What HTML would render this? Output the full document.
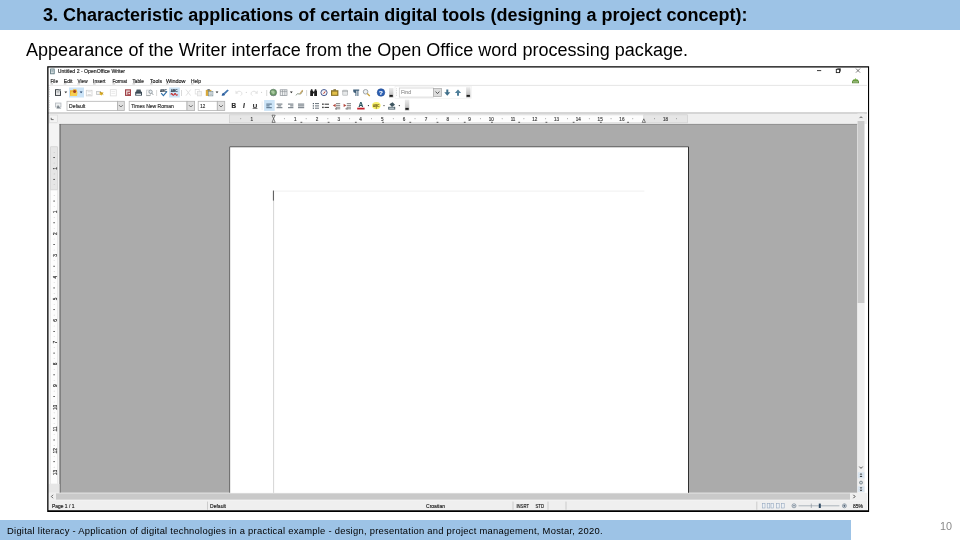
<!DOCTYPE html>
<html>
<head>
<meta charset="utf-8">
<title>Slide 10</title>
<style>
html,body{margin:0;padding:0;}
body{width:960px;height:540px;position:relative;overflow:hidden;background:#fff;font-family:"Liberation Sans",sans-serif;}
.a{position:absolute;}
#title,#sub,#ftxt,#pnum{will-change:transform;}
#hdr{left:0;top:0;width:960px;height:30px;background:#9dc3e6;}
#title{left:43px;top:5px;font-weight:bold;font-size:18px;line-height:20px;color:#000;white-space:nowrap;letter-spacing:0.005px;}
#sub{left:26px;top:40px;font-size:18px;line-height:20px;color:#000;white-space:nowrap;letter-spacing:0.03px;}
#ftr{left:0;top:520px;width:851px;height:20px;background:#9dc3e6;}
#ftxt{left:7.4px;top:524.5px;font-size:9.4px;line-height:12px;color:#000;white-space:nowrap;letter-spacing:0.266px;}
#pnum{left:940px;top:519.7px;font-size:10.8px;line-height:12px;color:#8a8a8a;white-space:nowrap;}
#win{left:47px;top:66px;width:822px;height:446px;background:#fff;}
#bsvg{left:44px;top:63px;width:830px;height:454px;}
#wsvg{left:47px;top:66px;width:822px;height:446px;background:#fff;overflow:hidden;font-family:"Liberation Sans",sans-serif;filter:blur(0.35px);}
</style>
</head>
<body>
<div id="hdr" class="a"></div>
<div id="title" class="a">3. Characteristic applications of certain digital tools (designing a project concept):</div>
<div id="sub" class="a">Appearance of the Writer interface from the Open Office word processing package.</div>
<div id="win" class="a"></div>
<svg id="wsvg" class="a" viewBox="47 66 822 446" preserveAspectRatio="none">
<defs><linearGradient id="hg" x1="0" y1="0" x2="0" y2="1"><stop offset="0" stop-color="#ececec"/><stop offset="1" stop-color="#b4b4b4"/></linearGradient></defs>
<rect x="50.20" y="68.60" width="4.40" height="5.60" fill="#4f6c74" />
<rect x="51.00" y="69.40" width="2.80" height="4.00" fill="#e8eef0" />
<line x1="51.30" y1="70.60" x2="53.50" y2="70.60" stroke="#4f6c74" stroke-width="0.5" />
<line x1="51.30" y1="71.80" x2="53.50" y2="71.80" stroke="#4f6c74" stroke-width="0.5" />
<text x="57.80" y="73.00" font-size="5.1" fill="#222222" stroke="#222222" stroke-width="0.16" text-anchor="start" textLength="67.20" lengthAdjust="spacingAndGlyphs" >Untitled 2 - OpenOffice Writer</text>
<line x1="817.00" y1="70.60" x2="821.20" y2="70.60" stroke="#222" stroke-width="0.9" />
<rect x="836.30" y="69.30" width="3.30" height="3.30" fill="none" stroke="#222" stroke-width="0.9"/>
<line x1="837.30" y1="68.70" x2="840.50" y2="68.70" stroke="#222" stroke-width="0.7" />
<line x1="840.50" y1="68.70" x2="840.50" y2="71.60" stroke="#222" stroke-width="0.7" />
<line x1="856.00" y1="68.60" x2="860.00" y2="72.60" stroke="#444" stroke-width="0.7" />
<line x1="860.00" y1="68.60" x2="856.00" y2="72.60" stroke="#444" stroke-width="0.7" />
<text x="50.50" y="83.00" font-size="5.1" fill="#222222" stroke="#222222" stroke-width="0.16" text-anchor="start" textLength="7.50" lengthAdjust="spacingAndGlyphs" >File</text>
<line x1="50.50" y1="83.90" x2="53.10" y2="83.90" stroke="#555" stroke-width="0.4" />
<text x="63.80" y="83.00" font-size="5.1" fill="#222222" stroke="#222222" stroke-width="0.16" text-anchor="start" textLength="8.70" lengthAdjust="spacingAndGlyphs" >Edit</text>
<line x1="63.80" y1="83.90" x2="66.40" y2="83.90" stroke="#555" stroke-width="0.4" />
<text x="77.50" y="83.00" font-size="5.1" fill="#222222" stroke="#222222" stroke-width="0.16" text-anchor="start" textLength="10.00" lengthAdjust="spacingAndGlyphs" >View</text>
<line x1="77.50" y1="83.90" x2="80.10" y2="83.90" stroke="#555" stroke-width="0.4" />
<text x="93.00" y="83.00" font-size="5.1" fill="#222222" stroke="#222222" stroke-width="0.16" text-anchor="start" textLength="12.50" lengthAdjust="spacingAndGlyphs" >Insert</text>
<line x1="93.00" y1="83.90" x2="95.60" y2="83.90" stroke="#555" stroke-width="0.4" />
<text x="112.50" y="83.00" font-size="5.1" fill="#222222" stroke="#222222" stroke-width="0.16" text-anchor="start" textLength="14.50" lengthAdjust="spacingAndGlyphs" >Format</text>
<line x1="112.50" y1="83.90" x2="115.10" y2="83.90" stroke="#555" stroke-width="0.4" />
<text x="132.50" y="83.00" font-size="5.1" fill="#222222" stroke="#222222" stroke-width="0.16" text-anchor="start" textLength="11.30" lengthAdjust="spacingAndGlyphs" >Table</text>
<line x1="132.50" y1="83.90" x2="135.10" y2="83.90" stroke="#555" stroke-width="0.4" />
<text x="150.00" y="83.00" font-size="5.1" fill="#222222" stroke="#222222" stroke-width="0.16" text-anchor="start" textLength="12.00" lengthAdjust="spacingAndGlyphs" >Tools</text>
<line x1="150.00" y1="83.90" x2="152.60" y2="83.90" stroke="#555" stroke-width="0.4" />
<text x="166.00" y="83.00" font-size="5.1" fill="#222222" stroke="#222222" stroke-width="0.16" text-anchor="start" textLength="19.50" lengthAdjust="spacingAndGlyphs" >Window</text>
<line x1="166.00" y1="83.90" x2="168.60" y2="83.90" stroke="#555" stroke-width="0.4" />
<text x="191.00" y="83.00" font-size="5.1" fill="#222222" stroke="#222222" stroke-width="0.16" text-anchor="start" textLength="10.00" lengthAdjust="spacingAndGlyphs" >Help</text>
<line x1="191.00" y1="83.90" x2="193.60" y2="83.90" stroke="#555" stroke-width="0.4" />
<path d="M852 83.3 L859 83.3 L859 81.3 L857.6 79.6 L853.4 79.6 L852 81.3 Z" fill="#5f8f3a" stroke="none" stroke-width="1" />
<path d="M854 80.6 L855.5 78 L857 80.6 Z" fill="#7ab648" stroke="none" stroke-width="1" />
<rect x="853.00" y="81.60" width="5.00" height="0.70" fill="#dfe8d0" />
<line x1="48.00" y1="85.40" x2="867.00" y2="85.40" stroke="#e2e2e2" stroke-width="0.9" />
<rect x="49.20" y="87.50" width="0.80" height="0.70" fill="#c4c4c4" />
<rect x="49.20" y="89.20" width="0.80" height="0.70" fill="#c4c4c4" />
<rect x="49.20" y="90.90" width="0.80" height="0.70" fill="#c4c4c4" />
<rect x="49.20" y="92.60" width="0.80" height="0.70" fill="#c4c4c4" />
<rect x="49.20" y="94.30" width="0.80" height="0.70" fill="#c4c4c4" />
<rect x="49.20" y="96.00" width="0.80" height="0.70" fill="#c4c4c4" />
<rect x="49.20" y="100.50" width="0.80" height="0.70" fill="#c4c4c4" />
<rect x="49.20" y="102.20" width="0.80" height="0.70" fill="#c4c4c4" />
<rect x="49.20" y="103.90" width="0.80" height="0.70" fill="#c4c4c4" />
<rect x="49.20" y="105.60" width="0.80" height="0.70" fill="#c4c4c4" />
<rect x="49.20" y="107.30" width="0.80" height="0.70" fill="#c4c4c4" />
<rect x="49.20" y="109.00" width="0.80" height="0.70" fill="#c4c4c4" />
<rect x="49.20" y="110.70" width="0.80" height="0.70" fill="#c4c4c4" />
<rect x="55.00" y="89.20" width="6.00" height="6.70" fill="#3c4246" />
<rect x="56.00" y="90.20" width="4.00" height="4.70" fill="#f4f4f4" />
<line x1="56.50" y1="91.40" x2="59.50" y2="91.40" stroke="#8a8f92" stroke-width="0.6" />
<line x1="56.50" y1="92.80" x2="59.50" y2="92.80" stroke="#8a8f92" stroke-width="0.6" />
<rect x="58.60" y="89.20" width="2.40" height="2.00" fill="#9aa3a8" />
<path d="M64.40 91.46 L67.20 91.46 L65.80 93.28 Z" fill="#333" stroke="none" stroke-width="1" />
<rect x="69.00" y="87.50" width="15.00" height="10.00" fill="#cce4f7" />
<path d="M70 90.2 L72.6 90.2 L73.4 89.3 L76.4 89.3 L76.4 90.2 L77 90.2 L77 95.9 L70 95.9 Z" fill="#eeb02c" stroke="none" stroke-width="1" />
<path d="M70 95.9 L71.3 91.8 L77.6 91.8 L77 95.9 Z" fill="#f7cf52" stroke="none" stroke-width="1" />
<circle cx="74.60" cy="91.60" r="1.50" fill="#a6401f" stroke="none" stroke-width="1"/>
<path d="M79.70 91.46 L82.50 91.46 L81.10 93.28 Z" fill="#1d3d66" stroke="none" stroke-width="1" />
<rect x="86.30" y="90.30" width="5.70" height="5.60" fill="none" stroke="#cfcfcf" stroke-width="0.8"/>
<rect x="87.60" y="90.30" width="3.20" height="2.10" fill="#e6e6e6" />
<rect x="87.60" y="94.00" width="3.20" height="1.90" fill="#dcdcdc" />
<rect x="96.20" y="91.00" width="4.80" height="3.80" fill="#b9bcbe" />
<rect x="96.90" y="91.70" width="3.40" height="2.40" fill="#f2f2f2" />
<path d="M99.6 92 L103.6 92.6 L101.8 95.4 L99.8 94.6 Z" fill="#e3b52d" stroke="none" stroke-width="1" />
<line x1="100.00" y1="92.00" x2="103.40" y2="94.60" stroke="#8a6a14" stroke-width="0.5" />
<rect x="110.30" y="89.70" width="6.00" height="6.20" fill="none" stroke="#dcdcdc" stroke-width="0.8"/>
<line x1="111.40" y1="91.60" x2="115.20" y2="91.60" stroke="#e2e2e2" stroke-width="0.7" />
<line x1="111.40" y1="93.40" x2="115.20" y2="93.40" stroke="#e2e2e2" stroke-width="0.7" />
<rect x="125.00" y="89.30" width="6.00" height="6.60" fill="#9c4046" />
<rect x="126.10" y="90.40" width="3.80" height="4.40" fill="#ecd6d6" />
<rect x="127.40" y="91.80" width="3.60" height="4.10" fill="#a8484c" />
<rect x="128.40" y="92.90" width="1.60" height="1.30" fill="#f4e4e4" />
<path d="M136.6 89.4 L140.6 89.4 L141.2 92 L136 92 Z" fill="#4c5a63" stroke="none" stroke-width="1" />
<rect x="135.20" y="91.80" width="6.80" height="3.40" fill="#3b4a55" />
<rect x="136.20" y="93.60" width="4.80" height="2.30" fill="#dfe4e7" />
<rect x="135.20" y="95.30" width="6.80" height="0.60" fill="#4c5a63" />
<rect x="146.20" y="89.70" width="4.80" height="6.20" fill="#c9cccf" />
<rect x="147.00" y="90.50" width="3.20" height="4.60" fill="#f5f5f5" />
<circle cx="150.60" cy="91.80" r="1.70" fill="#e9eef2" stroke="#7d868c" stroke-width="0.7"/>
<line x1="151.80" y1="93.10" x2="153.20" y2="94.80" stroke="#7d868c" stroke-width="0.9" />
<line x1="146.20" y1="95.60" x2="150.00" y2="95.60" stroke="#8a8f92" stroke-width="0.6" />
<line x1="156.60" y1="90.00" x2="156.60" y2="96.00" stroke="#c8c8c8" stroke-width="0.7" />
<text x="159.90" y="92.00" font-size="3.4" fill="#2a3a48" stroke="#2a3a48" stroke-width="0.16" text-anchor="start" textLength="7.00" lengthAdjust="spacingAndGlyphs" font-weight="bold">ABC</text>
<path d="M161.2 93.2 L163.4 95.6 L167 91.4" fill="none" stroke="#2f6fa8" stroke-width="1.2" />
<rect x="169.10" y="87.50" width="10.70" height="10.00" fill="#cce4f7" />
<text x="170.80" y="92.00" font-size="3.4" fill="#2a3a48" stroke="#2a3a48" stroke-width="0.16" text-anchor="start" textLength="6.80" lengthAdjust="spacingAndGlyphs" font-weight="bold">ABC</text>
<path d="M170.8 94.4 Q171.7 92.8 172.5 94.4 T174.2 94.4 T175.9 94.4 T177.6 94.4" fill="none" stroke="#c62a2a" stroke-width="1.1" />
<line x1="181.50" y1="90.00" x2="181.50" y2="96.00" stroke="#c8c8c8" stroke-width="0.7" />
<line x1="186.00" y1="89.60" x2="190.60" y2="95.60" stroke="#dedede" stroke-width="0.9" />
<line x1="190.60" y1="89.60" x2="186.00" y2="95.60" stroke="#dedede" stroke-width="0.9" />
<rect x="195.20" y="89.60" width="4.00" height="4.40" fill="none" stroke="#dadada" stroke-width="0.7"/>
<rect x="197.40" y="91.60" width="4.00" height="4.30" fill="#f3f3f3" stroke="#dadada" stroke-width="0.7"/>
<rect x="205.80" y="89.90" width="5.60" height="6.00" fill="#d9a93a" />
<rect x="207.40" y="89.10" width="2.40" height="1.50" fill="#6b7479" />
<rect x="208.40" y="91.40" width="4.50" height="4.50" fill="#eef1f2" stroke="#6e8790" stroke-width="0.6"/>
<line x1="209.30" y1="92.90" x2="212.00" y2="92.90" stroke="#6e8790" stroke-width="0.5" />
<line x1="209.30" y1="94.30" x2="212.00" y2="94.30" stroke="#6e8790" stroke-width="0.5" />
<path d="M215.60 91.46 L218.40 91.46 L217.00 93.28 Z" fill="#222" stroke="none" stroke-width="1" />
<path d="M227.4 89.4 L228.8 90.6 L225.2 94 L223.9 92.8 Z" fill="#3f74b0" stroke="none" stroke-width="1" />
<path d="M221.6 95.8 Q221.8 93 223.9 92.8 L225.2 94 Q225 96.2 221.6 95.8 Z" fill="#2d5f9e" stroke="none" stroke-width="1" />
<path d="M236 93 Q239 89.6 241.8 92.6 Q242.6 94.4 240.6 95.6" fill="none" stroke="#e2e2e2" stroke-width="1.0" />
<path d="M235.4 90.6 L235.6 94 L238.6 93.2 Z" fill="#e2e2e2" stroke="none" stroke-width="1" />
<circle cx="246.30" cy="92.40" r="0.55" fill="#cfcfcf" stroke="none" stroke-width="1"/>
<path d="M257 93 Q254 89.6 251.2 92.6 Q250.4 94.4 252.4 95.6" fill="none" stroke="#e2e2e2" stroke-width="1.0" />
<path d="M257.8 90.6 L257.6 94 L254.6 93.2 Z" fill="#e2e2e2" stroke="none" stroke-width="1" />
<circle cx="261.60" cy="92.40" r="0.55" fill="#cfcfcf" stroke="none" stroke-width="1"/>
<line x1="266.70" y1="90.00" x2="266.70" y2="96.00" stroke="#c8c8c8" stroke-width="0.7" />
<circle cx="273.30" cy="92.50" r="3.30" fill="#6f9c6a" stroke="#4e6e55" stroke-width="0.6"/>
<path d="M271 91 Q273 89.8 274.6 91.4 Q275.4 93.4 273.4 94.2 Q271.4 94 271 91 Z" fill="#a8c8a0" stroke="none" stroke-width="1" />
<rect x="271.20" y="95.20" width="4.40" height="0.70" fill="#7d8a8f" />
<rect x="280.20" y="89.80" width="6.80" height="5.80" fill="#f0f2f3" stroke="#8a9096" stroke-width="0.7"/>
<line x1="282.50" y1="89.80" x2="282.50" y2="95.60" stroke="#8a9096" stroke-width="0.6" />
<line x1="284.80" y1="89.80" x2="284.80" y2="95.60" stroke="#8a9096" stroke-width="0.6" />
<line x1="280.20" y1="91.60" x2="287.00" y2="91.60" stroke="#8a9096" stroke-width="0.6" />
<path d="M289.90 91.46 L292.70 91.46 L291.30 93.28 Z" fill="#222" stroke="none" stroke-width="1" />
<path d="M296 95.4 Q297.4 92.6 299 94 T302.8 91" fill="none" stroke="#8c9a8c" stroke-width="1.0" />
<path d="M299.4 93.4 L302.2 89.8 L303.2 90.6 L300.4 94.2 Z" fill="#c9a866" stroke="none" stroke-width="1" />
<line x1="306.60" y1="90.00" x2="306.60" y2="96.00" stroke="#c8c8c8" stroke-width="0.7" />
<rect x="310.20" y="90.60" width="2.80" height="5.40" fill="#1e1e1e" />
<rect x="314.20" y="90.60" width="2.80" height="5.40" fill="#1e1e1e" />
<rect x="310.90" y="89.20" width="1.50" height="1.80" fill="#2a2a2a" />
<rect x="314.80" y="89.20" width="1.50" height="1.80" fill="#2a2a2a" />
<rect x="312.60" y="91.60" width="2.00" height="1.80" fill="#222222" />
<circle cx="324.00" cy="92.60" r="3.10" fill="#f3f5f8" stroke="#3a4f8a" stroke-width="0.9"/>
<path d="M322.4 94.4 L324.4 92 L325.8 90.6 L324.8 93 Z" fill="#c0392b" stroke="none" stroke-width="1" />
<rect x="331.00" y="90.20" width="7.40" height="5.70" fill="#8a7428" />
<rect x="332.20" y="91.60" width="5.00" height="3.20" fill="#e3c04a" />
<rect x="333.40" y="89.30" width="2.60" height="1.10" fill="#6e5c1e" />
<rect x="342.20" y="89.80" width="5.80" height="6.00" fill="#c3c6c8" rx="1.2"/>
<rect x="343.20" y="90.80" width="3.80" height="4.00" fill="#e7e9ea" />
<line x1="342.20" y1="91.20" x2="348.00" y2="91.20" stroke="#8d9295" stroke-width="0.6" />
<path d="M353.2 89.6 L359.2 89.6 L359.2 90.8 L358.4 90.8 L358.4 95.9 L357.4 95.9 L357.4 90.8 L356.4 90.8 L356.4 95.9 L355.4 95.9 L355.4 93 Q353.2 92.8 353.2 91.2 Z" fill="#41607a" stroke="none" stroke-width="1" />
<circle cx="365.60" cy="91.80" r="2.30" fill="#eef1f3" stroke="#8a9196" stroke-width="0.8"/>
<line x1="367.20" y1="93.60" x2="369.80" y2="96.00" stroke="#c9a23a" stroke-width="1.3" />
<circle cx="381.00" cy="92.50" r="3.80" fill="#2c5fb3" stroke="#1d4488" stroke-width="0.5"/>
<text x="381.00" y="94.80" font-size="6.2" fill="#ffffff" stroke="#ffffff" stroke-width="0.16" text-anchor="middle" font-weight="bold">?</text>
<rect x="389.00" y="88.00" width="4.40" height="9.50" fill="url(#hg)"/>
<rect x="389.50" y="94.90" width="3.30" height="1.90" fill="#1a1a1a" />
<rect x="395.00" y="86.60" width="76.40" height="12.00" fill="#ffffff" stroke="#eeeeee" stroke-width="0.6"/>
<rect x="396.20" y="88.50" width="0.80" height="0.70" fill="#c4c4c4" />
<rect x="396.20" y="90.20" width="0.80" height="0.70" fill="#c4c4c4" />
<rect x="396.20" y="91.90" width="0.80" height="0.70" fill="#c4c4c4" />
<rect x="396.20" y="93.60" width="0.80" height="0.70" fill="#c4c4c4" />
<rect x="396.20" y="95.30" width="0.80" height="0.70" fill="#c4c4c4" />
<rect x="399.30" y="88.00" width="34.30" height="9.10" fill="#ffffff" stroke="#c9c9c9" stroke-width="0.7"/>
<text x="401.00" y="94.40" font-size="5.0" fill="#9a9a9a" stroke="#9a9a9a" stroke-width="0.16" text-anchor="start" textLength="10.00" lengthAdjust="spacingAndGlyphs" >Find</text>
<rect x="433.60" y="88.40" width="7.90" height="8.20" fill="#dddddd" stroke="#a8a8a8" stroke-width="0.7"/>
<path d="M435.6 91.6 L437.5 93.6 L439.4 91.6" fill="none" stroke="#333" stroke-width="0.8" />
<path d="M446.3 89.4 L448.3 89.4 L448.3 92.2 L450.3 92.2 L447.3 95.8 L444.3 92.2 L446.3 92.2 Z" fill="#3f6f8a" stroke="none" stroke-width="1" />
<path d="M457 95.8 L459 95.8 L459 93 L461.1 93 L458 89.4 L454.9 93 L457 93 Z" fill="#4f7f9a" stroke="none" stroke-width="1" />
<rect x="466.10" y="87.20" width="4.40" height="10.30" fill="url(#hg)"/>
<rect x="466.60" y="94.90" width="3.30" height="1.90" fill="#1a1a1a" />
<rect x="55.00" y="102.60" width="6.40" height="4.80" fill="#b9bec2" />
<rect x="55.90" y="103.50" width="4.60" height="3.00" fill="#eef0f1" />
<path d="M56.4 108.4 L58 104.8 L59.2 107 L61.4 108.4 Z" fill="#7d868c" stroke="none" stroke-width="1" />
<rect x="67.00" y="101.30" width="50.40" height="9.20" fill="#ffffff" stroke="#b4b4b4" stroke-width="0.8"/>
<rect x="117.40" y="101.30" width="6.90" height="9.20" fill="#e0e0e0" stroke="#b0b0b0" stroke-width="0.8"/>
<path d="M118.95 105.1 L120.85 107 L122.75 105.1" fill="none" stroke="#555" stroke-width="0.8" />
<text x="69.10" y="107.90" font-size="5.1" fill="#2e2e2e" stroke="#2e2e2e" stroke-width="0.16" text-anchor="start" textLength="16.20" lengthAdjust="spacingAndGlyphs" >Default</text>
<rect x="129.20" y="101.30" width="57.80" height="9.20" fill="#ffffff" stroke="#b4b4b4" stroke-width="0.8"/>
<rect x="187.00" y="101.30" width="7.60" height="9.20" fill="#e0e0e0" stroke="#b0b0b0" stroke-width="0.8"/>
<path d="M188.90 105.1 L190.80 107 L192.70 105.1" fill="none" stroke="#555" stroke-width="0.8" />
<text x="131.30" y="107.90" font-size="5.1" fill="#2e2e2e" stroke="#2e2e2e" stroke-width="0.16" text-anchor="start" textLength="42.50" lengthAdjust="spacingAndGlyphs" >Times New Roman</text>
<rect x="198.20" y="101.30" width="19.10" height="9.20" fill="#ffffff" stroke="#b4b4b4" stroke-width="0.8"/>
<rect x="217.30" y="101.30" width="7.40" height="9.20" fill="#e0e0e0" stroke="#b0b0b0" stroke-width="0.8"/>
<path d="M219.10 105.1 L221.00 107 L222.90 105.1" fill="none" stroke="#555" stroke-width="0.8" />
<text x="200.30" y="107.90" font-size="5.1" fill="#2e2e2e" stroke="#2e2e2e" stroke-width="0.16" text-anchor="start" textLength="5.00" lengthAdjust="spacingAndGlyphs" >12</text>
<text x="231.60" y="107.90" font-size="6.4" fill="#2a2a2a" stroke="#2a2a2a" stroke-width="0.16" text-anchor="start" font-weight="bold">B</text>
<text x="243.00" y="107.90" font-size="6.4" fill="#2a2a2a" stroke="#2a2a2a" stroke-width="0.16" text-anchor="start" font-weight="bold" font-style="italic">I</text>
<text x="252.80" y="107.60" font-size="6.2" fill="#2a2a2a" stroke="#2a2a2a" stroke-width="0.16" text-anchor="start" font-weight="bold">U</text>
<line x1="252.70" y1="108.50" x2="257.40" y2="108.50" stroke="#2a2a2a" stroke-width="0.6" />
<line x1="262.10" y1="101.50" x2="262.10" y2="110.00" stroke="#e4e4e4" stroke-width="0.6" />
<rect x="264.10" y="100.00" width="10.60" height="10.90" fill="#cce4f7" />
<line x1="266.30" y1="104.10" x2="271.80" y2="104.10" stroke="#2f4a63" stroke-width="0.8" />
<line x1="266.30" y1="105.90" x2="269.60" y2="105.90" stroke="#2f4a63" stroke-width="0.8" />
<line x1="266.30" y1="107.70" x2="271.80" y2="107.70" stroke="#2f4a63" stroke-width="0.8" />
<line x1="276.60" y1="104.10" x2="282.40" y2="104.10" stroke="#3c4a55" stroke-width="0.8" />
<line x1="277.76" y1="105.90" x2="281.24" y2="105.90" stroke="#3c4a55" stroke-width="0.8" />
<line x1="276.60" y1="107.70" x2="282.40" y2="107.70" stroke="#3c4a55" stroke-width="0.8" />
<line x1="288.00" y1="104.10" x2="293.40" y2="104.10" stroke="#3c4a55" stroke-width="0.8" />
<line x1="290.16" y1="105.90" x2="293.40" y2="105.90" stroke="#3c4a55" stroke-width="0.8" />
<line x1="288.00" y1="107.70" x2="293.40" y2="107.70" stroke="#3c4a55" stroke-width="0.8" />
<line x1="298.00" y1="104.10" x2="304.20" y2="104.10" stroke="#3c4a55" stroke-width="0.8" />
<line x1="298.00" y1="105.90" x2="304.20" y2="105.90" stroke="#3c4a55" stroke-width="0.8" />
<line x1="298.00" y1="107.70" x2="304.20" y2="107.70" stroke="#3c4a55" stroke-width="0.8" />
<rect x="312.80" y="103.00" width="1.10" height="1.20" fill="#3c4a55" />
<line x1="315.00" y1="103.60" x2="319.00" y2="103.60" stroke="#3c4a55" stroke-width="0.8" />
<rect x="312.80" y="105.30" width="1.10" height="1.20" fill="#3c4a55" />
<line x1="315.00" y1="105.90" x2="319.00" y2="105.90" stroke="#3c4a55" stroke-width="0.8" />
<rect x="312.80" y="107.60" width="1.10" height="1.20" fill="#3c4a55" />
<line x1="315.00" y1="108.20" x2="319.00" y2="108.20" stroke="#3c4a55" stroke-width="0.8" />
<rect x="322.20" y="103.50" width="1.40" height="1.40" fill="#222" />
<line x1="324.60" y1="104.20" x2="329.00" y2="104.20" stroke="#333" stroke-width="1.0" />
<rect x="322.20" y="106.70" width="1.40" height="1.40" fill="#222" />
<line x1="324.60" y1="107.40" x2="329.00" y2="107.40" stroke="#333" stroke-width="1.0" />
<line x1="336.00" y1="103.60" x2="340.20" y2="103.60" stroke="#555" stroke-width="0.7" />
<line x1="336.00" y1="105.40" x2="340.20" y2="105.40" stroke="#555" stroke-width="0.7" />
<line x1="336.00" y1="107.20" x2="340.20" y2="107.20" stroke="#555" stroke-width="0.7" />
<path d="M332.8 105.4 L335.6 103.8 L335.6 107 Z" fill="#b5473c" stroke="none" stroke-width="1" />
<line x1="335.00" y1="108.80" x2="340.20" y2="108.80" stroke="#555" stroke-width="0.7" />
<line x1="336.20" y1="107.40" x2="336.20" y2="110.00" stroke="#555" stroke-width="0.5" />
<line x1="346.80" y1="103.60" x2="351.00" y2="103.60" stroke="#555" stroke-width="0.7" />
<line x1="346.80" y1="105.40" x2="351.00" y2="105.40" stroke="#555" stroke-width="0.7" />
<line x1="346.80" y1="107.20" x2="351.00" y2="107.20" stroke="#555" stroke-width="0.7" />
<path d="M346.4 105.4 L343.6 103.8 L343.6 107 Z" fill="#b5473c" stroke="none" stroke-width="1" />
<line x1="345.40" y1="108.80" x2="351.00" y2="108.80" stroke="#555" stroke-width="0.7" />
<line x1="347.00" y1="107.40" x2="347.00" y2="110.00" stroke="#555" stroke-width="0.5" />
<text x="360.90" y="107.30" font-size="6.6" fill="#24505a" stroke="#24505a" stroke-width="0.16" text-anchor="middle" font-weight="bold">A</text>
<rect x="357.20" y="107.70" width="7.40" height="1.80" fill="#c4202a" />
<circle cx="368.40" cy="105.60" r="0.60" fill="#222" stroke="none" stroke-width="1"/>
<ellipse cx="376.3" cy="105.6" rx="4.3" ry="3.6" fill="#f7f06a"/>
<text x="376.30" y="106.80" font-size="3.2" fill="#7a6a1e" stroke="#7a6a1e" stroke-width="0.16" text-anchor="middle" textLength="6.40" lengthAdjust="spacingAndGlyphs" font-weight="bold">ABC</text>
<line x1="376.30" y1="106.80" x2="376.30" y2="108.80" stroke="#7a6a1e" stroke-width="0.8" />
<circle cx="384.00" cy="105.60" r="0.60" fill="#222" stroke="none" stroke-width="1"/>
<path d="M389.4 104.2 L392.6 102.2 L395 104.8 L392 107 Z" fill="#3e5560" stroke="none" stroke-width="1" />
<rect x="388.20" y="106.80" width="7.00" height="2.80" fill="#50646e" />
<rect x="389.20" y="107.60" width="5.00" height="1.20" fill="#c9d2d6" />
<circle cx="399.30" cy="105.60" r="0.60" fill="#222" stroke="none" stroke-width="1"/>
<rect x="404.90" y="99.70" width="4.40" height="10.80" fill="url(#hg)"/>
<rect x="405.40" y="107.90" width="3.30" height="1.90" fill="#1a1a1a" />
<line x1="48.00" y1="113.10" x2="867.00" y2="113.10" stroke="#9a9a9a" stroke-width="1.0" />
<rect x="48.00" y="113.60" width="819.00" height="10.40" fill="#efefef" />
<rect x="48.00" y="124.00" width="12.00" height="369.00" fill="#f4f4f4" />
<rect x="49.60" y="115.00" width="7.90" height="7.60" fill="#f3f3f3" stroke="#d8d8d8" stroke-width="0.6"/>
<path d="M51.2 117.8 L51.2 119.6 L53.6 119.6" fill="none" stroke="#333" stroke-width="0.7" />
<rect x="229.60" y="114.90" width="458.00" height="7.90" fill="#fdfdfd" stroke="#cfcfcf" stroke-width="0.6"/>
<rect x="229.60" y="114.90" width="43.70" height="7.90" fill="#e6e6e6" stroke="#cfcfcf" stroke-width="0.6"/>
<rect x="643.80" y="114.90" width="43.80" height="7.90" fill="#e6e6e6" stroke="#cfcfcf" stroke-width="0.6"/>
<text x="251.67" y="120.90" font-size="4.6" fill="#444" stroke="#444" stroke-width="0.16" text-anchor="middle" >1</text>
<circle cx="240.78" cy="118.80" r="0.45" fill="#555" stroke="none" stroke-width="1"/>
<text x="295.23" y="120.90" font-size="4.6" fill="#444" stroke="#444" stroke-width="0.16" text-anchor="middle" >1</text>
<circle cx="284.34" cy="118.80" r="0.45" fill="#555" stroke="none" stroke-width="1"/>
<text x="317.01" y="120.90" font-size="4.6" fill="#444" stroke="#444" stroke-width="0.16" text-anchor="middle" >2</text>
<circle cx="306.12" cy="118.80" r="0.45" fill="#555" stroke="none" stroke-width="1"/>
<text x="338.79" y="120.90" font-size="4.6" fill="#444" stroke="#444" stroke-width="0.16" text-anchor="middle" >3</text>
<circle cx="327.90" cy="118.80" r="0.45" fill="#555" stroke="none" stroke-width="1"/>
<text x="360.57" y="120.90" font-size="4.6" fill="#444" stroke="#444" stroke-width="0.16" text-anchor="middle" >4</text>
<circle cx="349.68" cy="118.80" r="0.45" fill="#555" stroke="none" stroke-width="1"/>
<text x="382.35" y="120.90" font-size="4.6" fill="#444" stroke="#444" stroke-width="0.16" text-anchor="middle" >5</text>
<circle cx="371.46" cy="118.80" r="0.45" fill="#555" stroke="none" stroke-width="1"/>
<text x="404.13" y="120.90" font-size="4.6" fill="#444" stroke="#444" stroke-width="0.16" text-anchor="middle" >6</text>
<circle cx="393.24" cy="118.80" r="0.45" fill="#555" stroke="none" stroke-width="1"/>
<text x="425.91" y="120.90" font-size="4.6" fill="#444" stroke="#444" stroke-width="0.16" text-anchor="middle" >7</text>
<circle cx="415.02" cy="118.80" r="0.45" fill="#555" stroke="none" stroke-width="1"/>
<text x="447.69" y="120.90" font-size="4.6" fill="#444" stroke="#444" stroke-width="0.16" text-anchor="middle" >8</text>
<circle cx="436.80" cy="118.80" r="0.45" fill="#555" stroke="none" stroke-width="1"/>
<text x="469.47" y="120.90" font-size="4.6" fill="#444" stroke="#444" stroke-width="0.16" text-anchor="middle" >9</text>
<circle cx="458.58" cy="118.80" r="0.45" fill="#555" stroke="none" stroke-width="1"/>
<text x="491.25" y="120.90" font-size="4.6" fill="#444" stroke="#444" stroke-width="0.16" text-anchor="middle" >10</text>
<circle cx="480.36" cy="118.80" r="0.45" fill="#555" stroke="none" stroke-width="1"/>
<text x="513.03" y="120.90" font-size="4.6" fill="#444" stroke="#444" stroke-width="0.16" text-anchor="middle" >11</text>
<circle cx="502.14" cy="118.80" r="0.45" fill="#555" stroke="none" stroke-width="1"/>
<text x="534.81" y="120.90" font-size="4.6" fill="#444" stroke="#444" stroke-width="0.16" text-anchor="middle" >12</text>
<circle cx="523.92" cy="118.80" r="0.45" fill="#555" stroke="none" stroke-width="1"/>
<text x="556.59" y="120.90" font-size="4.6" fill="#444" stroke="#444" stroke-width="0.16" text-anchor="middle" >13</text>
<circle cx="545.70" cy="118.80" r="0.45" fill="#555" stroke="none" stroke-width="1"/>
<text x="578.37" y="120.90" font-size="4.6" fill="#444" stroke="#444" stroke-width="0.16" text-anchor="middle" >14</text>
<circle cx="567.48" cy="118.80" r="0.45" fill="#555" stroke="none" stroke-width="1"/>
<text x="600.15" y="120.90" font-size="4.6" fill="#444" stroke="#444" stroke-width="0.16" text-anchor="middle" >15</text>
<circle cx="589.26" cy="118.80" r="0.45" fill="#555" stroke="none" stroke-width="1"/>
<text x="621.93" y="120.90" font-size="4.6" fill="#444" stroke="#444" stroke-width="0.16" text-anchor="middle" >16</text>
<circle cx="611.04" cy="118.80" r="0.45" fill="#555" stroke="none" stroke-width="1"/>
<circle cx="632.82" cy="118.80" r="0.45" fill="#555" stroke="none" stroke-width="1"/>
<text x="665.49" y="120.90" font-size="4.6" fill="#444" stroke="#444" stroke-width="0.16" text-anchor="middle" >18</text>
<circle cx="654.60" cy="118.80" r="0.45" fill="#555" stroke="none" stroke-width="1"/>
<circle cx="676.38" cy="118.80" r="0.45" fill="#555" stroke="none" stroke-width="1"/>
<line x1="300.48" y1="122.30" x2="302.28" y2="122.30" stroke="#333" stroke-width="0.8" />
<line x1="327.70" y1="122.30" x2="329.50" y2="122.30" stroke="#333" stroke-width="0.8" />
<line x1="354.93" y1="122.30" x2="356.73" y2="122.30" stroke="#333" stroke-width="0.8" />
<line x1="382.15" y1="122.30" x2="383.95" y2="122.30" stroke="#333" stroke-width="0.8" />
<line x1="409.38" y1="122.30" x2="411.18" y2="122.30" stroke="#333" stroke-width="0.8" />
<line x1="436.60" y1="122.30" x2="438.40" y2="122.30" stroke="#333" stroke-width="0.8" />
<line x1="463.82" y1="122.30" x2="465.62" y2="122.30" stroke="#333" stroke-width="0.8" />
<line x1="491.05" y1="122.30" x2="492.85" y2="122.30" stroke="#333" stroke-width="0.8" />
<line x1="518.27" y1="122.30" x2="520.08" y2="122.30" stroke="#333" stroke-width="0.8" />
<line x1="545.50" y1="122.30" x2="547.30" y2="122.30" stroke="#333" stroke-width="0.8" />
<line x1="572.72" y1="122.30" x2="574.52" y2="122.30" stroke="#333" stroke-width="0.8" />
<line x1="599.95" y1="122.30" x2="601.75" y2="122.30" stroke="#333" stroke-width="0.8" />
<line x1="627.17" y1="122.30" x2="628.98" y2="122.30" stroke="#333" stroke-width="0.8" />
<path d="M272.00 115.2 L275.20 115.2 L273.60 118.6 L275.20 122.4 L272.00 122.4 L273.60 118.6 Z" fill="#f4f4f4" stroke="#333" stroke-width="0.6" />
<path d="M642.2 122.4 L645.4 122.4 L643.8 118.8 Z" fill="#f4f4f4" stroke="#333" stroke-width="0.6" />
<rect x="59.60" y="124.00" width="797.80" height="368.80" fill="#ababab" />
<line x1="59.60" y1="124.40" x2="857.40" y2="124.40" stroke="#8e8e8e" stroke-width="0.9" />
<line x1="60.10" y1="124.00" x2="60.10" y2="492.80" stroke="#6a6a6a" stroke-width="1.1" />
<rect x="229.60" y="146.60" width="459.30" height="347.40" fill="#222222" />
<rect x="230.10" y="147.20" width="457.90" height="346.80" fill="#ffffff" />
<line x1="273.60" y1="190.60" x2="273.60" y2="493.00" stroke="#c9c9c9" stroke-width="0.8" />
<line x1="273.60" y1="191.10" x2="644.40" y2="191.10" stroke="#ececec" stroke-width="0.8" />
<line x1="273.40" y1="190.60" x2="273.40" y2="200.60" stroke="#555" stroke-width="1.0" />
<rect x="50.70" y="146.80" width="6.60" height="43.20" fill="#e6e6e6" stroke="#c9c9c9" stroke-width="0.6"/>
<rect x="50.70" y="190.00" width="6.60" height="294.00" fill="#fdfdfd" stroke="#dcdcdc" stroke-width="0.5"/>
<rect x="48.60" y="484.00" width="10.90" height="8.70" fill="#e6e6e6" />
<text transform="translate(56.5 168.48) rotate(-90)" font-size="4.8" fill="#222" stroke="#222" stroke-width="0.15" text-anchor="middle">1</text>
<rect x="53.30" y="157.22" width="1.60" height="0.80" fill="#333" />
<rect x="53.30" y="178.94" width="1.60" height="0.80" fill="#333" />
<circle cx="54.10" cy="184.77" r="0.30" fill="#666" stroke="none" stroke-width="1"/>
<circle cx="54.10" cy="173.91" r="0.30" fill="#666" stroke="none" stroke-width="1"/>
<circle cx="54.10" cy="163.05" r="0.30" fill="#666" stroke="none" stroke-width="1"/>
<circle cx="54.10" cy="152.19" r="0.30" fill="#666" stroke="none" stroke-width="1"/>
<text transform="translate(56.5 211.92) rotate(-90)" font-size="4.8" fill="#222" stroke="#222" stroke-width="0.15" text-anchor="middle">1</text>
<rect x="53.30" y="200.66" width="1.60" height="0.80" fill="#333" />
<circle cx="54.10" cy="206.49" r="0.30" fill="#666" stroke="none" stroke-width="1"/>
<circle cx="54.10" cy="195.63" r="0.30" fill="#666" stroke="none" stroke-width="1"/>
<text transform="translate(56.5 233.64) rotate(-90)" font-size="4.8" fill="#222" stroke="#222" stroke-width="0.15" text-anchor="middle">2</text>
<rect x="53.30" y="222.38" width="1.60" height="0.80" fill="#333" />
<circle cx="54.10" cy="228.21" r="0.30" fill="#666" stroke="none" stroke-width="1"/>
<circle cx="54.10" cy="217.35" r="0.30" fill="#666" stroke="none" stroke-width="1"/>
<text transform="translate(56.5 255.36) rotate(-90)" font-size="4.8" fill="#222" stroke="#222" stroke-width="0.15" text-anchor="middle">3</text>
<rect x="53.30" y="244.10" width="1.60" height="0.80" fill="#333" />
<circle cx="54.10" cy="249.93" r="0.30" fill="#666" stroke="none" stroke-width="1"/>
<circle cx="54.10" cy="239.07" r="0.30" fill="#666" stroke="none" stroke-width="1"/>
<text transform="translate(56.5 277.08) rotate(-90)" font-size="4.8" fill="#222" stroke="#222" stroke-width="0.15" text-anchor="middle">4</text>
<rect x="53.30" y="265.82" width="1.60" height="0.80" fill="#333" />
<circle cx="54.10" cy="271.65" r="0.30" fill="#666" stroke="none" stroke-width="1"/>
<circle cx="54.10" cy="260.79" r="0.30" fill="#666" stroke="none" stroke-width="1"/>
<text transform="translate(56.5 298.80) rotate(-90)" font-size="4.8" fill="#222" stroke="#222" stroke-width="0.15" text-anchor="middle">5</text>
<rect x="53.30" y="287.54" width="1.60" height="0.80" fill="#333" />
<circle cx="54.10" cy="293.37" r="0.30" fill="#666" stroke="none" stroke-width="1"/>
<circle cx="54.10" cy="282.51" r="0.30" fill="#666" stroke="none" stroke-width="1"/>
<text transform="translate(56.5 320.52) rotate(-90)" font-size="4.8" fill="#222" stroke="#222" stroke-width="0.15" text-anchor="middle">6</text>
<rect x="53.30" y="309.26" width="1.60" height="0.80" fill="#333" />
<circle cx="54.10" cy="315.09" r="0.30" fill="#666" stroke="none" stroke-width="1"/>
<circle cx="54.10" cy="304.23" r="0.30" fill="#666" stroke="none" stroke-width="1"/>
<text transform="translate(56.5 342.24) rotate(-90)" font-size="4.8" fill="#222" stroke="#222" stroke-width="0.15" text-anchor="middle">7</text>
<rect x="53.30" y="330.98" width="1.60" height="0.80" fill="#333" />
<circle cx="54.10" cy="336.81" r="0.30" fill="#666" stroke="none" stroke-width="1"/>
<circle cx="54.10" cy="325.95" r="0.30" fill="#666" stroke="none" stroke-width="1"/>
<text transform="translate(56.5 363.96) rotate(-90)" font-size="4.8" fill="#222" stroke="#222" stroke-width="0.15" text-anchor="middle">8</text>
<rect x="53.30" y="352.70" width="1.60" height="0.80" fill="#333" />
<circle cx="54.10" cy="358.53" r="0.30" fill="#666" stroke="none" stroke-width="1"/>
<circle cx="54.10" cy="347.67" r="0.30" fill="#666" stroke="none" stroke-width="1"/>
<text transform="translate(56.5 385.68) rotate(-90)" font-size="4.8" fill="#222" stroke="#222" stroke-width="0.15" text-anchor="middle">9</text>
<rect x="53.30" y="374.42" width="1.60" height="0.80" fill="#333" />
<circle cx="54.10" cy="380.25" r="0.30" fill="#666" stroke="none" stroke-width="1"/>
<circle cx="54.10" cy="369.39" r="0.30" fill="#666" stroke="none" stroke-width="1"/>
<text transform="translate(56.5 407.40) rotate(-90)" font-size="4.8" fill="#222" stroke="#222" stroke-width="0.15" text-anchor="middle">10</text>
<rect x="53.30" y="396.14" width="1.60" height="0.80" fill="#333" />
<circle cx="54.10" cy="401.97" r="0.30" fill="#666" stroke="none" stroke-width="1"/>
<circle cx="54.10" cy="391.11" r="0.30" fill="#666" stroke="none" stroke-width="1"/>
<text transform="translate(56.5 429.12) rotate(-90)" font-size="4.8" fill="#222" stroke="#222" stroke-width="0.15" text-anchor="middle">11</text>
<rect x="53.30" y="417.86" width="1.60" height="0.80" fill="#333" />
<circle cx="54.10" cy="423.69" r="0.30" fill="#666" stroke="none" stroke-width="1"/>
<circle cx="54.10" cy="412.83" r="0.30" fill="#666" stroke="none" stroke-width="1"/>
<text transform="translate(56.5 450.84) rotate(-90)" font-size="4.8" fill="#222" stroke="#222" stroke-width="0.15" text-anchor="middle">12</text>
<rect x="53.30" y="439.58" width="1.60" height="0.80" fill="#333" />
<circle cx="54.10" cy="445.41" r="0.30" fill="#666" stroke="none" stroke-width="1"/>
<circle cx="54.10" cy="434.55" r="0.30" fill="#666" stroke="none" stroke-width="1"/>
<text transform="translate(56.5 472.56) rotate(-90)" font-size="4.8" fill="#222" stroke="#222" stroke-width="0.15" text-anchor="middle">13</text>
<rect x="53.30" y="461.30" width="1.60" height="0.80" fill="#333" />
<circle cx="54.10" cy="467.13" r="0.30" fill="#666" stroke="none" stroke-width="1"/>
<circle cx="54.10" cy="456.27" r="0.30" fill="#666" stroke="none" stroke-width="1"/>
<rect x="857.40" y="113.60" width="7.20" height="379.20" fill="#efefef" />
<rect x="857.60" y="121.00" width="6.80" height="182.00" fill="#c9c9c9" />
<path d="M859.6 118.1 L861 116.7 L862.4 118.1" fill="none" stroke="#444" stroke-width="0.9" />
<path d="M859.3 466.6 L861 468.4 L862.7 466.6" fill="none" stroke="#444" stroke-width="0.9" />
<rect x="857.80" y="472.20" width="6.60" height="6.00" fill="#dbe6f0" />
<path d="M859.6 474.6 L861 473.2 L862.4 474.6 Z M859.6 477 L861 475.6 L862.4 477 Z" fill="#222" stroke="none" stroke-width="1" />
<circle cx="861.00" cy="482.60" r="1.50" fill="#cfd6da" stroke="#4a5a66" stroke-width="0.6"/>
<rect x="857.80" y="486.20" width="6.60" height="5.80" fill="#dbe6f0" />
<path d="M859.6 487.4 L861 488.8 L862.4 487.4 Z M859.6 489.8 L861 491.2 L862.4 489.8 Z" fill="#222" stroke="none" stroke-width="1" />
<rect x="48.60" y="492.80" width="818.80" height="7.40" fill="#efefef" />
<rect x="56.00" y="493.40" width="794.00" height="6.20" fill="#c9c9c9" />
<path d="M53 494.8 L51.4 496.5 L53 498.2" fill="none" stroke="#555" stroke-width="0.9" />
<path d="M853.4 494.8 L855 496.5 L853.4 498.2" fill="none" stroke="#333" stroke-width="0.9" />
<rect x="48.60" y="500.20" width="818.80" height="10.40" fill="#efefef" />
<text x="52.00" y="508.00" font-size="5.0" fill="#222222" stroke="#222222" stroke-width="0.16" text-anchor="start" textLength="22.40" lengthAdjust="spacingAndGlyphs" >Page 1 / 1</text>
<text x="210.00" y="508.00" font-size="5.0" fill="#222222" stroke="#222222" stroke-width="0.16" text-anchor="start" textLength="16.00" lengthAdjust="spacingAndGlyphs" >Default</text>
<text x="426.00" y="508.00" font-size="5.0" fill="#222222" stroke="#222222" stroke-width="0.16" text-anchor="start" textLength="19.00" lengthAdjust="spacingAndGlyphs" >Croatian</text>
<text x="516.40" y="508.00" font-size="4.8" fill="#222222" stroke="#222222" stroke-width="0.16" text-anchor="start" textLength="12.60" lengthAdjust="spacingAndGlyphs" >INSRT</text>
<text x="535.40" y="508.00" font-size="4.8" fill="#222222" stroke="#222222" stroke-width="0.16" text-anchor="start" textLength="8.60" lengthAdjust="spacingAndGlyphs" >STD</text>
<line x1="207.50" y1="501.60" x2="207.50" y2="509.80" stroke="#bdbdbd" stroke-width="0.7" />
<line x1="513.00" y1="501.60" x2="513.00" y2="509.80" stroke="#bdbdbd" stroke-width="0.7" />
<line x1="548.00" y1="501.60" x2="548.00" y2="509.80" stroke="#bdbdbd" stroke-width="0.7" />
<line x1="566.00" y1="501.60" x2="566.00" y2="509.80" stroke="#bdbdbd" stroke-width="0.7" />
<line x1="756.80" y1="501.60" x2="756.80" y2="509.80" stroke="#bdbdbd" stroke-width="0.7" />
<rect x="762.40" y="503.60" width="2.60" height="4.40" fill="#eef2f6" stroke="#8fa3bc" stroke-width="0.55"/>
<rect x="767.20" y="503.60" width="2.60" height="4.40" fill="#eef2f6" stroke="#8fa3bc" stroke-width="0.55"/>
<rect x="771.00" y="503.60" width="2.60" height="4.40" fill="#eef2f6" stroke="#8fa3bc" stroke-width="0.55"/>
<rect x="776.60" y="503.60" width="2.60" height="4.40" fill="#eef2f6" stroke="#8fa3bc" stroke-width="0.55"/>
<rect x="781.60" y="503.60" width="2.60" height="4.40" fill="#eef2f6" stroke="#8fa3bc" stroke-width="0.55"/>
<circle cx="794.00" cy="505.80" r="2.00" fill="#eef2f6" stroke="#5d6f80" stroke-width="0.6"/>
<line x1="792.80" y1="505.80" x2="795.20" y2="505.80" stroke="#34465a" stroke-width="0.7" />
<line x1="798.50" y1="505.80" x2="839.40" y2="505.80" stroke="#9aa4ad" stroke-width="0.8" />
<line x1="811.30" y1="503.60" x2="811.30" y2="508.00" stroke="#7d8790" stroke-width="0.6" />
<rect x="818.80" y="503.60" width="2.00" height="4.40" fill="#2f4a63" />
<circle cx="844.40" cy="505.80" r="2.00" fill="#eef2f6" stroke="#5d6f80" stroke-width="0.6"/>
<line x1="843.20" y1="505.80" x2="845.60" y2="505.80" stroke="#34465a" stroke-width="0.7" />
<line x1="844.40" y1="504.60" x2="844.40" y2="507.00" stroke="#34465a" stroke-width="0.7" />
<text x="853.00" y="508.00" font-size="5.0" fill="#222222" stroke="#222222" stroke-width="0.16" text-anchor="start" textLength="10.00" lengthAdjust="spacingAndGlyphs" >85%</text>
</svg>
<svg id="bsvg" class="a" viewBox="44 63 830 454"><path fill-rule="evenodd" fill="#000" d="M47.2 66.3 H869.1 V511.9 H47.2 Z M48.5 67.4 V510.2 H868 V67.4 Z"/></svg>
<div id="ftr" class="a"></div>
<div id="ftxt" class="a">Digital literacy - Application of digital technologies in a practical example - design, presentation and project management, Mostar, 2020.</div>
<div id="pnum" class="a">10</div>
</body>
</html>
